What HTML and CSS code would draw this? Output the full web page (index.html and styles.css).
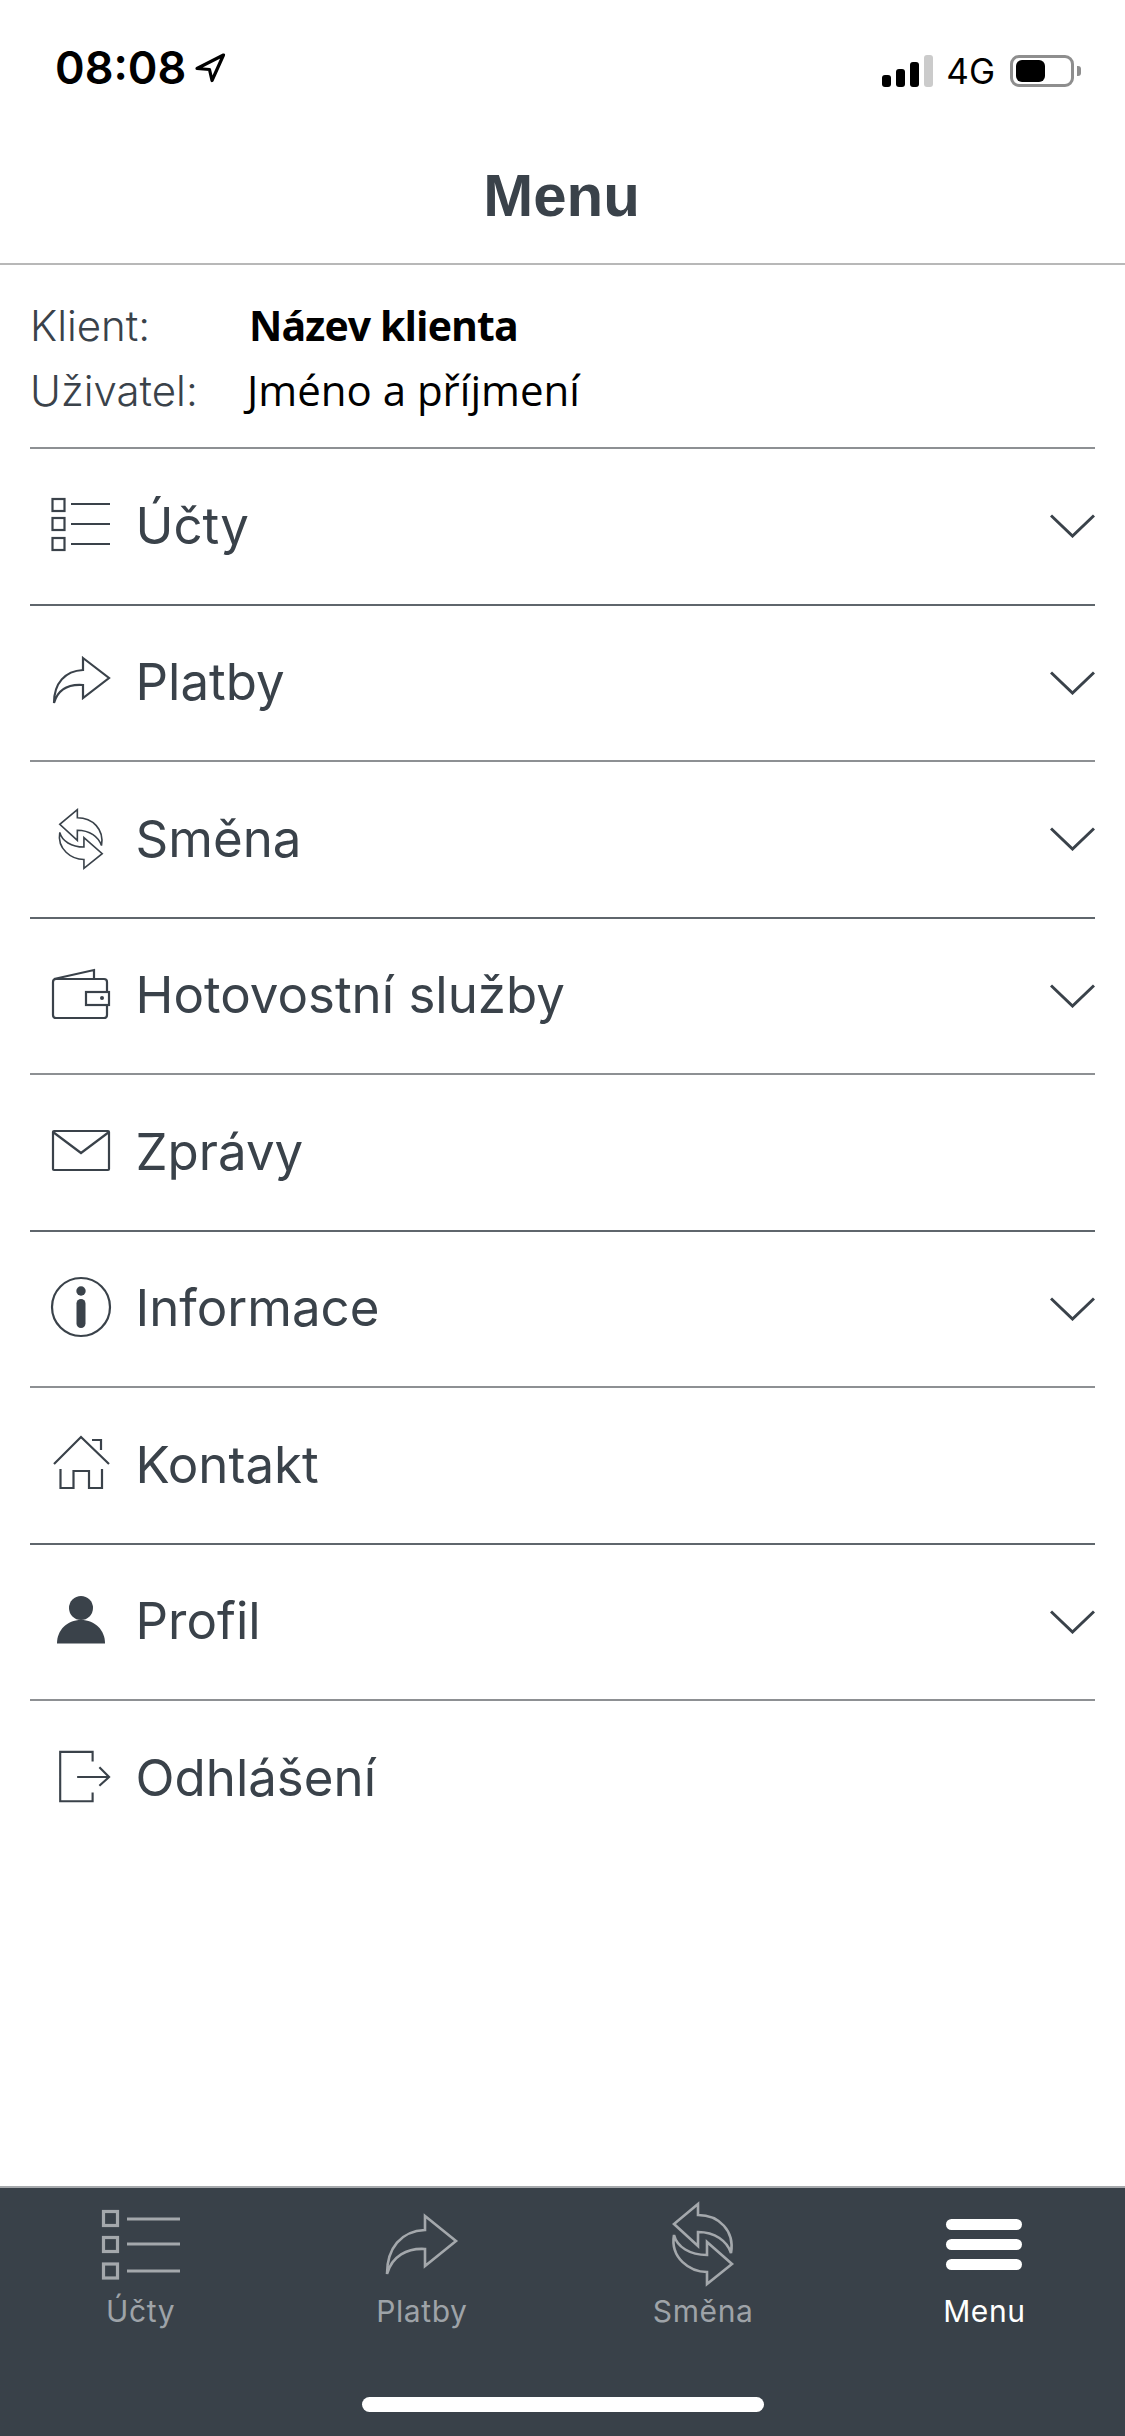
FILE: index.html
```html
<!DOCTYPE html>
<html lang="cs">
<head>
<meta charset="utf-8">
<title>Menu</title>
<link rel="stylesheet" href="styles.css">
</head>
<body>
<div class="screen">
  <div class="statusbar">
    <div class="status-left">
      <span class="time">08:08</span>
      <svg class="loc" viewBox="0 0 32 30"><path d="M29.5 2 L3 15.5 L15.5 16.5 L18 27.5 Z"/></svg>
    </div>
    <div class="status-right">
      <div class="signal"><i class="b1"></i><i class="b2"></i><i class="b3"></i><i class="b4"></i></div>
      <span class="net">4G</span>
      <div class="battery"><div class="battery-fill"></div></div>
      <div class="battery-cap"></div>
    </div>
  </div>
  <header class="header"><h1>Menu</h1></header>
  <section class="info">
    <span class="info-label">Klient:</span><strong class="info-client">Název klienta</strong>
    <span class="info-label">Uživatel:</span><span class="info-user">Jméno a příjmení</span>
  </section>
  <nav class="menu">
    <a class="row">
      <svg class="icon" viewBox="0 0 60 60"><rect x="1.5" y="3" width="12" height="12"/><rect x="1.5" y="22" width="12" height="12"/><rect x="1.5" y="42" width="12" height="12"/><path d="M20 8H59M20 28H59M20 48H59"/></svg>
      <span class="label">Účty</span>
      <svg class="chev" viewBox="0 0 45 24"><path d="M1 1.5 L22.5 22 L44 1.5"/></svg>
    </a>
    <a class="row">
      <svg class="icon" viewBox="0 0 60 60"><path d="M32 5 L58 25 L32 45 V32 C18 31 7 36 3 50 C3 30 14 18 32 17 Z"/></svg>
      <span class="label">Platby</span>
      <svg class="chev" viewBox="0 0 45 24"><path d="M1 1.5 L22.5 22 L44 1.5"/></svg>
    </a>
    <a class="row">
      <svg class="icon" viewBox="-9 0 78 82"><path d="M25 1 L1 21 L25 43 V29 C42 29 54 38 58 50 C62 28 46 12 25 12 Z"/><path d="M34 39 L59 61 L34 81 V69 C17 69 -3 55 1 32 C4 44 17 52 34 52 Z"/></svg>
      <span class="label">Směna</span>
      <svg class="chev" viewBox="0 0 45 24"><path d="M1 1.5 L22.5 22 L44 1.5"/></svg>
    </a>
    <a class="row">
      <svg class="icon" viewBox="0 0 60 60"><path d="M3 13 L43 4 V13"/><rect x="2" y="13" width="54" height="39" rx="3"/><rect class="paper" x="35" y="26" width="23" height="13"/><circle class="solid" cx="51" cy="32" r="2"/></svg>
      <span class="label">Hotovostní služby</span>
      <svg class="chev" viewBox="0 0 45 24"><path d="M1 1.5 L22.5 22 L44 1.5"/></svg>
    </a>
    <a class="row">
      <svg class="icon" viewBox="0 0 60 60"><rect x="2" y="9" width="56" height="39" rx="1"/><path d="M2 10 L30 31 L58 10"/></svg>
      <span class="label">Zprávy</span>
    </a>
    <a class="row">
      <svg class="icon" viewBox="0 0 60 60"><circle cx="30" cy="28" r="29"/><circle class="solid" cx="30" cy="12" r="4.7"/><rect class="solid" x="25.5" y="20" width="9" height="29" rx="4.5"/></svg>
      <span class="label">Informace</span>
      <svg class="chev" viewBox="0 0 45 24"><path d="M1 1.5 L22.5 22 L44 1.5"/></svg>
    </a>
    <a class="row">
      <svg class="icon" viewBox="0 0 60 60"><path d="M3 29 L30 2 L58 29M41 5 H50 V15M9.5 34 V53 H22.5 V36 H38 V53 H51 V34"/></svg>
      <span class="label">Kontakt</span>
    </a>
    <a class="row">
      <svg class="icon" viewBox="0 0 60 60"><circle class="solid" cx="30" cy="16" r="12"/><path class="solid" d="M6 51.5 C6 38 16 28 30 28 C44 28 54 38 54 51.5 Z"/></svg>
      <span class="label">Profil</span>
      <svg class="chev" viewBox="0 0 45 24"><path d="M1 1.5 L22.5 22 L44 1.5"/></svg>
    </a>
    <a class="row">
      <svg class="icon" viewBox="0 0 62 60"><path d="M43 13 V3 H9.5 V54 H43 V45M27 29 H60M50 19 L60 29 L50 38"/></svg>
      <span class="label">Odhlášení</span>
    </a>
  </nav>
  <footer class="tabbar">
    <div class="tabs">
      <a class="tab">
        <span class="tab-icon"><svg class="ti ti-list" viewBox="0 0 78 69"><rect x="1.5" y="1.5" width="14" height="14"/><rect x="1.5" y="27.5" width="14" height="14"/><rect x="1.5" y="54" width="14" height="14"/><path d="M25 9H78M25 34H78M25 61H78"/></svg></span>
        <span class="tab-label">Účty</span>
      </a>
      <a class="tab">
        <span class="tab-icon"><svg class="ti ti-arrow" viewBox="0 0 73 61"><path d="M40 2 L71 27 L40 52 V35 C22 34 7 42 2 60 C2 34 16 17 40 16 Z"/></svg></span>
        <span class="tab-label">Platby</span>
      </a>
      <a class="tab">
        <span class="tab-icon"><svg class="ti ti-swap" viewBox="0 0 60 82"><path d="M25 1 L1 21 L25 43 V29 C42 29 54 38 58 50 C62 28 46 12 25 12 Z"/><path d="M34 39 L59 61 L34 81 V69 C17 69 -3 55 1 32 C4 44 17 52 34 52 Z"/></svg></span>
        <span class="tab-label">Směna</span>
      </a>
      <a class="tab tab-active">
        <span class="tab-icon"><span class="burger"><i></i><i></i><i></i></span></span>
        <span class="tab-label">Menu</span>
      </a>
    </div>
    <div class="home-indicator"></div>
  </footer>
</div>
</body>
</html>
```
FILE: styles.css
```css
* { box-sizing: border-box; }
html, body { margin: 0; padding: 0; background: #fff; }
.screen {
  width: 1125px; height: 2436px; display: flex; flex-direction: column;
  font-family: Inter, "Liberation Sans", sans-serif; color: #3a424a; overflow: hidden;
}

.statusbar {
  height: 132px; flex: none; display: flex; justify-content: space-between;
  padding: 46px 44px 0 55px; align-items: flex-start; color: #000;
}
.status-left { display: flex; align-items: center; gap: 8px; }
.time { font-size: 45px; font-weight: 600; line-height: 44px; }
.loc { width: 32px; height: 30px; }
.loc path { fill: none; stroke: #000; stroke-width: 3.2; stroke-linejoin: round; }
.status-right { display: flex; align-items: center; height: 44px; padding-top: 6px; }
.signal { display: flex; align-items: flex-end; gap: 5px; height: 32px; }
.signal i { display: block; width: 9px; background: #000; border-radius: 3px; }
.signal .b1 { height: 12px; }
.signal .b2 { height: 18px; }
.signal .b3 { height: 25px; }
.signal .b4 { height: 32px; background: #cbcbcb; }
.net { font-size: 35px; line-height: 32px; margin-left: 13px; color: #000; }
.battery {
  width: 64px; height: 32px; margin-left: 15px; border: 3px solid #8e8e8e;
  border-radius: 9px; padding: 2px 3px;
}
.battery-fill { width: 29px; height: 22px; background: #000; border-radius: 6px; }
.battery-cap { width: 4px; height: 10px; margin-left: 3px; background: #8e8e8e; border-radius: 0 3px 3px 0; }

.header {
  height: 133px; flex: none; display: flex; align-items: center; justify-content: center;
  border-bottom: 2px solid #b8b8b8;
}
.header h1 {
  margin: 0 2px 4px 0; font-family: "Liberation Sans", Arial, sans-serif;
  font-size: 60px; font-weight: 700; line-height: 1; color: #3a424a;
}

.info {
  flex: none; height: 182px; margin: 0 30px; padding-top: 32px;
  display: grid; grid-template-columns: 217px 1fr; grid-auto-rows: 64px; align-items: baseline;
}
.info-label { font-size: 42px; font-weight: 300; color: #3a424a; }
.info-client { font-family: "Open Sans", sans-serif; font-size: 41px; font-weight: 700; letter-spacing: -0.9px; color: #000; padding-left: 2px; }
.info-user { font-family: "Open Sans", sans-serif; font-size: 42px; font-weight: 400; color: #000; }

.menu { flex: 1; margin: 0 30px; display: flex; flex-direction: column; }
.row {
  flex: none; height: 156.5px; display: flex; align-items: center; padding-left: 21px;
  border-top: 2px solid #8d9093;
}
.row:nth-child(even) { border-top-color: #5f666c; }
.icon { width: 60px; height: 60px; flex: none; overflow: visible; }
.icon rect, .icon path, .icon circle { fill: none; stroke: #3a424a; stroke-width: 2.2; }
.icon .solid { fill: #3a424a; stroke: none; }
.icon .paper { fill: #fff; }
.label { margin: 0 0 2px 24.5px; font-size: 51px; font-weight: 400; line-height: 1; color: #3a424a; flex: 1; }
.chev { width: 45px; height: 24px; flex: none; }
.chev path { fill: none; stroke: #3a424a; stroke-width: 3; }

.tabbar {
  flex: none; height: 250px; background: #394149; border-top: 2px solid #a6a9ac;
  display: flex; flex-direction: column; align-items: center;
}
.tabs { width: 100%; display: grid; grid-template-columns: repeat(4, 1fr); padding-top: 15px; }
.tab { display: flex; flex-direction: column; align-items: center; color: #9ea3a8; }
.tab-active { color: #fff; }
.tab-icon { height: 82px; display: flex; align-items: center; justify-content: center; }
.ti { display: block; overflow: visible; }
.ti-list { width: 78px; height: 69px; }
.ti-arrow { width: 73px; height: 61px; }
.ti-swap { width: 60px; height: 82px; }
.ti rect, .ti path { fill: none; stroke: #a4a8ac; }
.ti-list rect { stroke-width: 3.2; }
.ti-list path { stroke-width: 3; }
.ti-arrow path, .ti-swap path { stroke-width: 2.6; }
.burger { display: flex; flex-direction: column; gap: 9px; width: 76px; }
.burger i { display: block; height: 11px; background: #fff; border-radius: 6px; }
.tab-label { margin-top: 8px; font-size: 30px; line-height: 36px; letter-spacing: 0.6px; }
.home-indicator { width: 402px; height: 15px; margin-top: 68px; background: #fff; border-radius: 8px; }
```
